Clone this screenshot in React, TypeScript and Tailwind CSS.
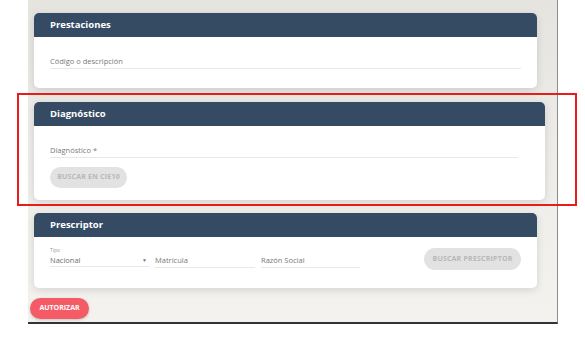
import { type ReactNode } from 'react';

function Card({ title, width, children }: { title: string; width: string; children: ReactNode }) {
  return (
    <div className={`${width} ml-[4px] rounded-[5px] bg-white shadow-[0_2px_8px_rgba(0,0,0,0.13)]`}>
      <div className="h-[24px] rounded-t-[5px] bg-[#354a63] px-[16px] flex items-center text-[9.5px] font-bold text-white">
        {title}
      </div>
      {children}
    </div>
  );
}

function Field({ label, className }: { label: string; className: string }) {
  return (
    <div className={`${className} border-b border-[#e8e8e8] pb-[2px] text-[7.5px] leading-[9px] text-[#7a7a7a]`}>
      {label}
    </div>
  );
}

export default function App() {
  return (
    <div className="relative w-[585px] h-[338px] bg-white font-['Open_Sans',sans-serif]">
      <div className="ml-[28px] w-[530px] h-[324px] bg-linear-to-b from-[#e5e4df] via-[#eeede9] to-[#f3f2ee] border-r border-[#8c8c8c] border-b-2 border-b-[#333333] pt-[13px] pl-[2px] flex flex-col">
        <Card title="Prestaciones" width="w-[503px]">
          <div className="pt-[20px] pb-[19px] px-[16px]">
            <Field label="Código o descripción" className="w-full" />
          </div>
        </Card>

        <div className="mt-[14px]">
          <Card title="Diagnóstico" width="w-[511px]">
            <div className="pt-[20px] pb-[12px] pl-[16px] pr-[27px]">
              <Field label="Diagnóstico *" className="w-full" />
              <button className="mt-[9px] h-[21px] w-[77px] rounded-full bg-[#e2e2e2] text-[7px] font-bold text-[#b8b8b8] tracking-[0.2px]">
                BUSCAR EN CIE10
              </button>
            </div>
          </Card>
        </div>

        <div className="mt-[13px]">
          <Card title="Prescriptor" width="w-[503px]">
            <div className="h-[51px] pt-[10px] px-[16px] flex items-start">
              <div className="w-[99px] border-b border-[#e8e8e8] pb-[1px]">
                <div className="text-[5px] leading-[7px] text-[#9a9a9a]">Tipo</div>
                <div className="mt-[1px] flex items-center justify-between text-[7.5px] leading-[10px] text-[#6f6f6f]">
                  <span>Nacional</span>
                  <span className="mr-[2px] text-[5px] text-[#777777]">▼</span>
                </div>
              </div>
              <Field label="Matrícula" className="ml-[6px] mt-[8px] w-[100px] pb-[2px] leading-[10px]" />
              <Field label="Razón Social" className="ml-[6px] mt-[8px] w-[99px] pb-[2px] leading-[10px]" />
              <button className="ml-auto mt-[1px] h-[22px] w-[97px] rounded-full bg-[#e2e2e2] text-[7px] font-bold text-[#b8b8b8] tracking-[0.2px]">
                BUSCAR PRESCRIPTOR
              </button>
            </div>
          </Card>
        </div>

        <button className="mt-[10px] h-[21px] w-[59px] rounded-full bg-[#f45b66] text-[7px] font-bold text-white shadow-[0_1px_3px_rgba(0,0,0,0.2)]">
          AUTORIZAR
        </button>
      </div>

      <div className="absolute left-[17px] top-[93px] w-[560px] h-[113px] border-2 border-[#e51d1d]" />
    </div>
  );
}
